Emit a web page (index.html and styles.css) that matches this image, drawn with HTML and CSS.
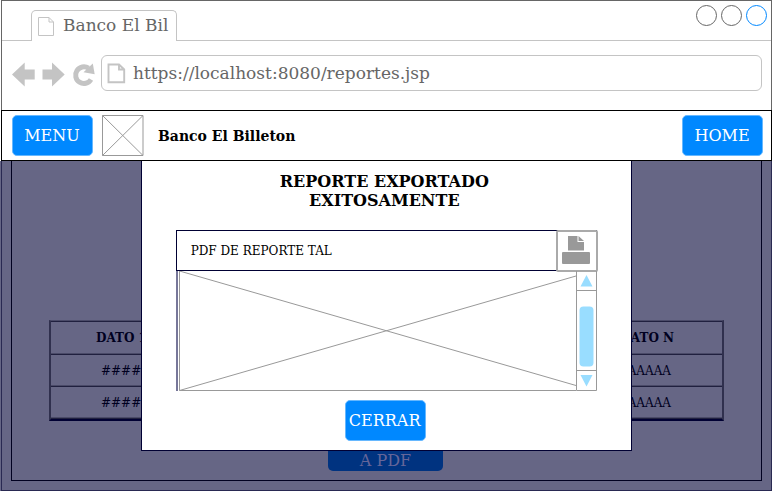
FILE: index.html
```html
<!DOCTYPE html>
<html lang="es">
<head>
<meta charset="utf-8">
<title>Banco El Billeton</title>
<link rel="stylesheet" href="styles.css">
</head>
<body>
<div class="window">
  <header class="chrome">
    <div class="tabs">
      <div class="tab">
        <svg class="tab-icon" width="17" height="20" viewBox="0 0 17 20"><path d="M.5 .5H11L15.500 5V18.500H.5ZM11 .5V5H15.500" fill="none" stroke="#c4c4c4"/></svg>
        <span>Banco El Bil</span>
      </div>
      <div class="controls"><i></i><i></i><i class="active"></i></div>
    </div>
    <div class="toolbar">
      <svg class="nav-icons" width="84" height="26" viewBox="0 0 84 26"><g fill="#c4c4c4"><path d="M0 13.500 12.700 1.500V8.500H22.700V18.500H12.700V25.500Z"/><path d="M52.700 13.500 40 1.500V8.500H30.500V18.500H40V25.500Z"/></g><path d="M79 18.500A8.300 8.300 0 1 1 76.500 7.200" fill="none" stroke="#c4c4c4" stroke-width="5"/><path d="M80.800 2.500 82.700 13.300 71.500 11.200Z" fill="#c4c4c4"/></svg>
      <div class="address">
        <svg width="19" height="21" viewBox="0 0 19 21"><path d="M1.500 1.500H12L17.200 6.500V19.300H1.500ZM12 1.500V6.500H17.200" fill="none" stroke="#c4c4c4" stroke-width="1.900"/></svg>
        <span>https://localhost:8080/reportes.jsp</span>
      </div>
    </div>
  </header>
  <nav class="navbar">
    <button>MENU</button>
    <svg class="logo" width="42" height="41" viewBox="0 0 42 41"><path d="M.5 .5H41V40.500H.5ZL41 40.500M41 .5.5 40.500" fill="none" stroke="#999"/></svg>
    <b>Banco El Billeton</b>
    <button class="home">HOME</button>
  </nav>
  <main class="page">
    <div class="content">
      <div class="table">
        <div class="row head"><span>DATO 1</span><span>DATO N</span></div>
        <div class="row"><span class="marks">#####</span><span>AAAAAA</span></div>
        <div class="row"><span class="marks">#####</span><span>AAAAAA</span></div>
      </div>
      <div class="export">A PDF</div>
    </div>
    <section class="modal">
      <h1>REPORTE EXPORTADO<br>EXITOSAMENTE</h1>
      <div class="report">
        <div class="file">
          <span>PDF DE REPORTE TAL</span>
          <div class="print"><svg width="28" height="28" viewBox="0 0 28 28"><path d="M6 0H15.500V6H22V14.500H6Z" fill="#999"/><path d="M16.500 0 22 5H16.500Z" fill="#999"/><rect y="16" width="28" height="12" rx="1" fill="#999"/></svg></div>
        </div>
        <div class="preview">
          <svg class="cross" width="397" height="120" viewBox="0 0 397 120"><path d="M.5 0V119.500H397" fill="none" stroke="#999"/><path d="M.5 0 397 114.500M.5 119.500 397 5" fill="none" stroke="#999"/></svg>
          <svg class="scroll" width="21" height="120" viewBox="0 0 21 120"><path d="M.5 0V119.500H20.500V0M.5 19.500H20.500M.5 99.500H20.500" fill="none" stroke="#999"/><path d="M10.500 4 16.500 15.500H4.500ZM4.500 104H16.500L10.500 115.500Z" fill="#9df"/><rect x="3.500" y="35.500" width="14" height="60" rx="4" fill="#9df"/></svg>
        </div>
      </div>
      <button>CERRAR</button>
    </section>
  </main>
</div>
</body>
</html>
```
FILE: styles.css
```css
* { box-sizing: border-box; }
body { margin: 0; background: #fff; font-family: "DejaVu Serif", serif; font-size: 17px; overflow: hidden; }
svg { display: block; flex: none; }
.window { width: 773px; height: 492px; }
.chrome { width: 771px; height: 110px; margin-left: 1px; border: 1px solid #666; border-bottom: 0; color: #666; }
.tabs { display: flex; height: 40px; }
.tabs::before { content: ""; width: 29px; border-bottom: 1px solid #c4c4c4; }
.tab { display: flex; width: 146px; height: 31px; margin-top: 9px; padding: 6px 0 0 6px; border: 1px solid #c4c4c4; border-bottom: 0; border-radius: 5px 5px 0 0; gap: 8px; line-height: 17px; white-space: nowrap; }
.controls { flex: 1; display: flex; justify-content: flex-end; gap: 4px; padding: 4px 4px 0 0; border-bottom: 1px solid #c4c4c4; }
.controls i { width: 21px; height: 21px; border: 1px solid #666; border-radius: 50%; }
.controls .active { border-color: #08f; }
.toolbar { display: flex; padding: 14px 9px 0 10px; gap: 5px; }
.nav-icons { margin-top: 6px; }
.address { display: flex; flex: 1; align-items: center; height: 36px; padding-left: 5px; gap: 7px; border: 1px solid #c4c4c4; border-radius: 6px; }
.navbar { display: flex; width: 771px; height: 51px; margin-left: 1px; padding: 4px 8px 4px 10px; border: 1px solid #000; align-items: flex-start; }
button { width: 81px; height: 41px; padding: 0 1px 1px 0; border: 1px solid #66b8ff; border-radius: 5px; background: #08f; color: #fff; font: 16px "DejaVu Serif", serif; }
.logo { margin-left: 9px; }
.navbar b { margin-left: 14px; font-size: 14px; line-height: 42px; }
.home { margin-left: auto; }
.page { position: relative; width: 772px; height: 330px; padding: 0 0 0 1px; background: #666685; }
.page::before { content: ""; position: absolute; inset: 0 0 0 1px; border: solid #292952; border-width: 0 1px 1px; }
.content { width: 751px; height: 320px; margin-left: 10px; padding: 159px 37px 0; border: solid #000020; border-width: 0 1px 1px; color: #000020; font-size: 12px; }
.table { width: 675px; height: 101px; border: 2px solid; border-color: #4a4a68 #30304e #000033 #30304e; border-top-width: 1px; }
.row { display: flex; justify-content: space-between; align-items: center; height: 32px; padding: 1px 51px 0 50px; border-bottom: 1px solid #20203f; box-shadow: inset 0 -1px #4a4a68; line-height: 14px; }
.row.head { height: 34px; padding: 0 48px 1px 45px; border-top: 1px solid #20203f; font-weight: bold; }
.export { width: 115px; height: 50px; margin: 0 0 0 279px; padding: 30px 0 0; border-radius: 5px; background: #003380; color: #666699; font: 16px/20px "DejaVu Serif", serif; text-align: center; }
.modal { position: absolute; left: 140.670px; top: 0; width: 491.330px; height: 290px; padding: 11px 34px 0; border: solid #000033; border-width: 0 1px 1px; background: #fff; }
.modal h1 { margin: 0; text-align: center; padding-right: 4px; font-size: 16px; line-height: 19px; }
.report { width: 421px; margin-top: 20px; }
.file { display: flex; justify-content: space-between; align-items: center; height: 41px; border: 1px solid #000033; padding-left: 14px; font-size: 12px; }
.print { display: flex; width: 42px; height: 42px; margin-right: -2px; padding: 0 1px 1px 0; align-items: center; justify-content: center; border: 2px solid #aaa; border-radius: 2px; background: #fff; }
.preview { display: flex; height: 120px; padding-left: 1px; border-left: 2px solid #777799; }
.modal button { display: block; margin: 9px 0 0 169px; }
```
